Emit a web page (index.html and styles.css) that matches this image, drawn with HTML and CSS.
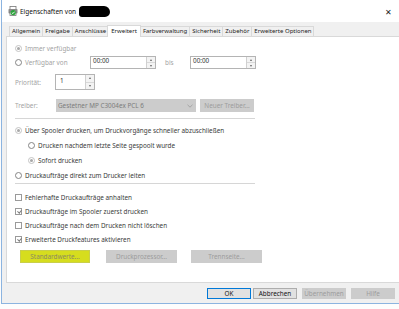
FILE: index.html
```html
<!DOCTYPE html>
<html lang="de">
<head>
  <meta charset="UTF-8">
  <title>Eigenschaften von Drucker</title>
  <link rel="stylesheet" href="styles.css">
</head>
<body>
  <div class="window">
    <!-- Titelleiste -->
    <div class="titlebar">
      <svg class="appicon" width="10" height="10" viewBox="0 0 10 10">
        <rect x="2" y="0.5" width="6" height="3" fill="#fff" stroke="#777" stroke-width="0.8"/>
        <rect x="0.5" y="3" width="9" height="4.5" rx="0.8" fill="#8a8a8a"/>
        <rect x="2" y="6" width="6" height="3.5" fill="#fff" stroke="#777" stroke-width="0.8"/>
        <circle cx="5.2" cy="6.6" r="2.6" fill="#2aa33a"/>
        <path d="M3.9 6.7 L4.9 7.6 L6.6 5.7" fill="none" stroke="#fff" stroke-width="0.9"/>
      </svg>
      <span class="title">Eigenschaften von</span>
      <span class="redacted"></span>
      <span class="close">✕</span>
    </div>

    <div class="dialog">
      <!-- Registerkarten -->
      <div class="tabs">
        <span class="tab">Allgemein</span>
        <span class="tab">Freigabe</span>
        <span class="tab">Anschlüsse</span>
        <span class="tab active">Erweitert</span>
        <span class="tab">Farbverwaltung</span>
        <span class="tab">Sicherheit</span>
        <span class="tab">Zubehör</span>
        <span class="tab">Erweiterte Optionen</span>
      </div>

      <div class="panel">
        <div class="row r-always">
          <span class="radio disabled checked"></span>
          <span class="muted">Immer verfügbar</span>
        </div>

        <div class="row r-from">
          <span class="radio"></span>
          <span class="lbl-from muted">Verfügbar von</span>
          <span class="timebox"><span>00:00</span><span class="spin"><i class="up"></i><i class="down"></i></span></span>
          <span class="lbl-to muted">bis</span>
          <span class="timebox"><span>00:00</span><span class="spin"><i class="up"></i><i class="down"></i></span></span>
        </div>

        <div class="row r-prio">
          <span class="field-label muted">Priorität:</span>
          <span class="prio"><span>1</span><span class="spin"><i class="up"></i><i class="down"></i></span></span>
        </div>

        <div class="row r-driver">
          <span class="field-label muted">Treiber:</span>
          <span class="select">
            <span>Gestetner MP C3004ex PCL 6</span>
            <svg width="6" height="4" viewBox="0 0 6 4"><path d="M0.5 0.8 L3 3.2 L5.5 0.8" fill="none" stroke="#9a9a9a" stroke-width="0.8"/></svg>
          </span>
          <span class="btn disabled new-driver">Neuer Treiber...</span>
        </div>

        <div class="sep sep-1"></div>

        <div class="row r-spool">
          <span class="radio checked disabled"></span>
          <span>Über Spooler drucken, um Druckvorgänge schneller abzuschließen</span>
        </div>
        <div class="row r-sub">
          <span class="radio"></span>
          <span>Drucken nachdem letzte Seite gespoolt wurde</span>
        </div>
        <div class="row r-sub">
          <span class="radio checked disabled"></span>
          <span>Sofort drucken</span>
        </div>
        <div class="row r-direct">
          <span class="radio"></span>
          <span>Druckaufträge direkt zum Drucker leiten</span>
        </div>

        <div class="sep sep-2"></div>

        <div class="row r-check first">
          <span class="check"></span>
          <span>Fehlerhafte Druckaufträge anhalten</span>
        </div>
        <div class="row r-check">
          <span class="check checked"></span>
          <span>Druckaufträge im Spooler zuerst drucken</span>
        </div>
        <div class="row r-check">
          <span class="check"></span>
          <span>Druckaufträge nach dem Drucken nicht löschen</span>
        </div>
        <div class="row r-check">
          <span class="check checked"></span>
          <span>Erweiterte Druckfeatures aktivieren</span>
        </div>

        <div class="row r-buttons">
          <span class="btn highlight">Standardwerte...</span>
          <span class="btn disabled">Druckprozessor...</span>
          <span class="btn disabled">Trennseite...</span>
        </div>
      </div>

      <!-- Dialogschaltflächen -->
      <div class="footer">
        <span class="btn default">OK</span>
        <span class="btn normal">Abbrechen</span>
        <span class="btn disabled">Übernehmen</span>
        <span class="btn disabled">Hilfe</span>
      </div>
    </div>
  </div>
</body>
</html>
```

FILE: styles.css
```css
/* Grundlayout */
body {
  margin: 0;
  width: 399px;
  height: 309px;
  overflow: hidden;
  background: #fdfdfd;
  font-family: 'Noto Sans', sans-serif;
  font-size: 6.35px;
  color: #3a3a3a;
}
.window {
  margin-left: 1px;
  width: 398px;
  height: 303px;
  border-left: 1px solid #8cb4e0;
  border-bottom: 1px solid #8cb4e0;
  background: #fff;
}

/* Titelleiste */
.titlebar {
  height: 22px;
  display: flex;
  align-items: center;
  padding-left: 6px;
  background: #fff;
  color: #111;
  font-size: 6.5px;
}
.appicon {
  margin-right: 2px;
}
.redacted {
  width: 31px;
  height: 11px;
  margin-left: 3px;
  background: #000;
  border-radius: 4px 6px 5px 3px;
}
.close {
  margin-left: auto;
  margin-right: 8px;
  font-size: 8px;
  color: #222;
}

/* Dialogfläche */
.dialog {
  height: 281px;
  background: #f0f0f0;
}
.tabs {
  display: flex;
  align-items: flex-end;
  height: 11px;
  padding-top: 3px;
  padding-left: 7px;
  position: relative;
  z-index: 1;
}
.tab {
  height: 9px;
  line-height: 9px;
  padding: 0 2px;
  border: 1px solid #d9d9d9;
  border-bottom: none;
  margin-right: -1px;
  background: #f0f0f0;
  color: #222;
  font-size: 6px;
  white-space: nowrap;
}
.tab.active {
  height: 11px;
  line-height: 10px;
  background: #fff;
  padding: 0 3px;
  margin: 0 -1px 0 -1px;
  position: relative;
  top: 1px;
  z-index: 2;
}
.panel {
  margin-left: 4px;
  width: 384px;
  height: 245px;
  border: 1px solid #d9d9d9;
  background: #fff;
  padding-left: 8px;
  box-sizing: content-box;
}

/* Zeilen */
.row {
  display: flex;
  align-items: center;
  height: 10px;
  white-space: nowrap;
}
.r-always { margin-top: 6px; }
.r-from { margin-top: 3px; height: 13px; }
.r-prio { margin-top: 5px; height: 16px; }
.r-driver { margin-top: 9px; height: 13px; }
.r-spool { margin-top: 6px; }
.r-sub { margin-top: 5px; padding-left: 13px; }
.r-direct { margin-top: 5px; }
.r-check { margin-top: 4px; }
.r-check.first { margin-top: 8px; }
.r-buttons { margin-top: 6px; height: 13px; padding-left: 5px; }

.muted { color: #a3a3a3; }

.sep {
  width: 240px;
  height: 1px;
  background: #d6d6d6;
}
.sep-1 { margin-top: 6px; }
.sep-2 { margin-top: 3px; }

/* Optionsfelder und Kontrollkästchen */
.radio {
  width: 5px;
  height: 5px;
  border: 1px solid #858585;
  border-radius: 50%;
  margin-right: 3px;
  display: flex;
  align-items: center;
  justify-content: center;
  flex-shrink: 0;
}
.radio.disabled { border-color: #c4c4c4; }
.radio.checked::after {
  content: '';
  width: 3px;
  height: 3px;
  border-radius: 50%;
  background: #a8a8a8;
}
.check {
  width: 5px;
  height: 5px;
  border: 1px solid #9a9a9a;
  margin-right: 3px;
  position: relative;
  flex-shrink: 0;
}
.check.checked::after {
  content: '';
  position: absolute;
  left: 1.5px;
  top: 0;
  width: 1.6px;
  height: 3.2px;
  border: solid #7a7a7a;
  border-width: 0 0.8px 0.8px 0;
  transform: rotate(40deg);
}

/* Eingabefelder */
.lbl-from { width: 65px; }
.lbl-to { width: 34px; padding-left: 9px; box-sizing: border-box; }
.timebox, .prio {
  height: 13px;
  border: 1px solid #b4b4b4;
  box-sizing: border-box;
  display: flex;
  align-items: flex-start;
  justify-content: space-between;
  padding-left: 2px;
  line-height: 8px;
  color: #333;
  background: #fff;
}
.timebox { width: 66px; }
.prio { width: 40px; height: 16px; line-height: 11px; padding-left: 4px; }
.spin {
  width: 8px;
  height: 100%;
  display: flex;
  flex-direction: column;
  border-left: 1px solid #d0d0d0;
}
.spin i {
  flex: 1;
  display: flex;
  align-items: center;
  justify-content: center;
  background: #f3f3f3;
}
.spin i + i { border-top: 1px solid #d8d8d8; }
.spin .up::after {
  content: '';
  border: 1.5px solid transparent;
  border-bottom: 2px solid #666;
  border-top: none;
}
.spin .down::after {
  content: '';
  border: 1.5px solid transparent;
  border-top: 2px solid #666;
  border-bottom: none;
}
.field-label { width: 40px; }
.select {
  width: 140px;
  height: 13px;
  margin-left: 1px;
  background: #cccccc;
  color: #7c7c7c;
  display: flex;
  align-items: center;
  justify-content: space-between;
  padding: 0 3px 0 2px;
  box-sizing: border-box;
}

/* Schaltflächen */
.btn {
  height: 13px;
  display: flex;
  align-items: center;
  justify-content: center;
  box-sizing: border-box;
  white-space: nowrap;
}
.btn.disabled {
  background: #cccccc;
  color: #9c9c9c;
  border: 1px solid #cccccc;
}
.new-driver { width: 54px; margin-left: 4px; }
.highlight {
  width: 70px;
  background: #d6dd1e;
  color: #8b8b60;
  border: 1px solid #c9cf4a;
}
.r-buttons .btn.disabled { width: 71px; }
.r-buttons .btn + .btn { margin-left: 16px; }
.r-buttons .btn + .btn + .btn { margin-left: 14px; }

.footer {
  display: flex;
  justify-content: flex-end;
  gap: 2px;
  padding: 5px 5px 0 0;
}
.footer .btn {
  width: 44px;
  height: 11px;
}
.footer .btn + .btn.disabled { margin-left: 3px; }
.btn.default {
  background: #e1e1e1;
  border: 1px solid #0078d7;
  color: #111;
}
.btn.normal {
  background: #e1e1e1;
  border: 1px solid #adadad;
  color: #111;
}
```
